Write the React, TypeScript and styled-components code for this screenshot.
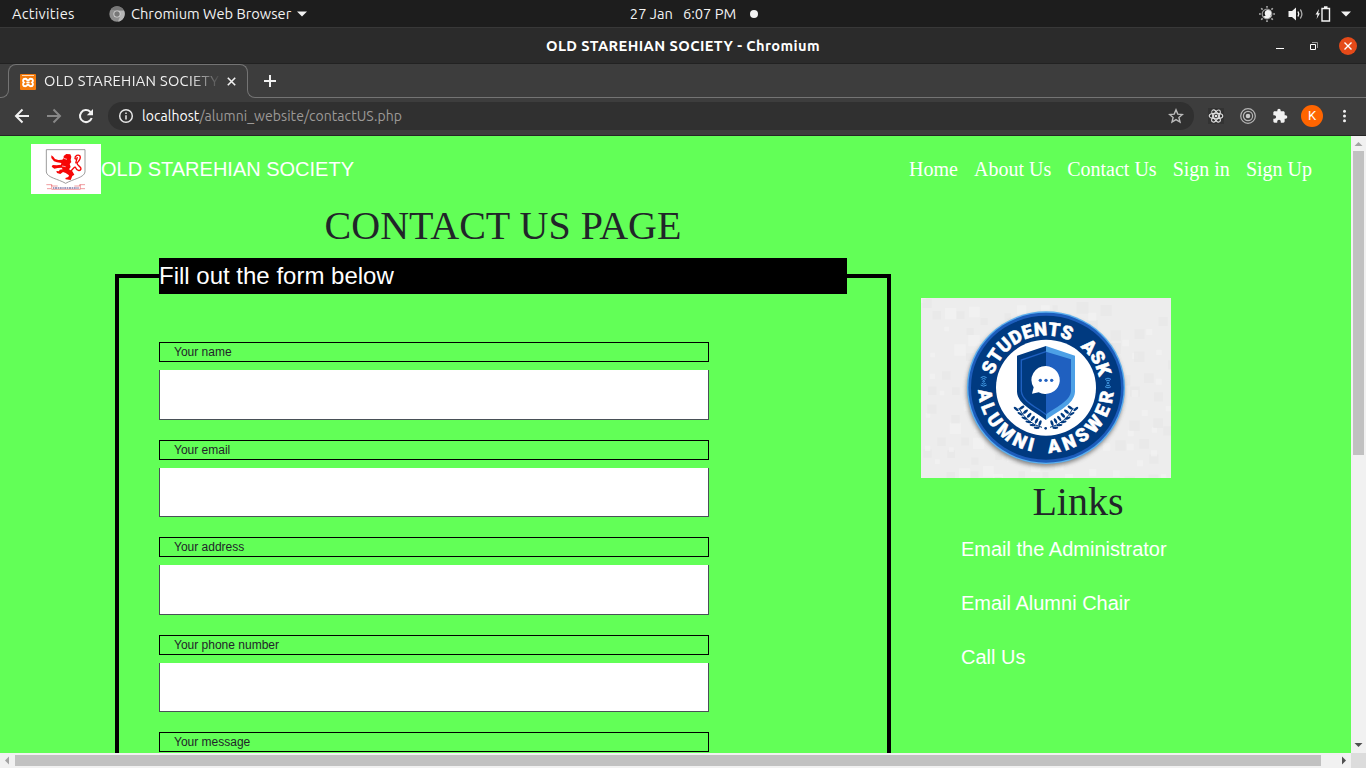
import React from "react";
import styled, { createGlobalStyle } from "styled-components";

const GlobalStyle = createGlobalStyle`
  * { box-sizing: border-box; }
  html, body { margin: 0; padding: 0; overflow: hidden; }
`;

const ui = `"Ubuntu", "Noto Sans", sans-serif`;
const sans = `"Liberation Sans", Arial, sans-serif`;
const serif = `"Liberation Serif", "Times New Roman", serif`;

const Screen = styled.div`
  width: 1366px;
  height: 768px;
  display: flex;
  flex-direction: column;
  overflow: hidden;
  background: #3d3d3d;
  font-family: ${ui};
`;

/* Desktop panel */
const Panel = styled.header`
  height: 27px;
  flex: none;
  display: grid;
  grid-template-columns: 1fr auto 1fr;
  align-items: center;
  background: #1d1d1d;
  color: #f2f2f2;
  font-size: 14.667px;
  line-height: 27px;
`;
const PanelLeft = styled.div`
  display: flex;
  align-items: center;
  padding-left: 12px;
`;
const Label = styled.span<{ $track?: number; $width?: number }>`
  white-space: pre;
  letter-spacing: ${(p) => p.$track ?? 0}px;
  width: ${(p) => (p.$width ? `${p.$width}px` : "auto")};
`;
const AppMenu = styled.div`
  display: flex;
  align-items: center;
  margin-left: 34px;
  gap: 6px;
`;
const Clock = styled.div`
  display: flex;
  align-items: center;
  gap: 10px;
  padding-left: 22px;
`;
const Dot = styled.i`
  width: 8px;
  height: 8px;
  border-radius: 50%;
  background: #f2f2f2;
  margin-left: 4px;
`;
const Tray = styled.div`
  display: flex;
  justify-content: flex-end;
  align-items: center;
  padding-right: 15px;
`;

/* Window title */
const TitleBar = styled.div`
  height: 37px;
  flex: none;
  display: grid;
  grid-template-columns: 1fr auto 1fr;
  align-items: center;
  background: #2b2b2b;
  border-top: 1px solid #383838;
  border-bottom: 1px solid #222;
  color: #fff;
  font-size: 14.667px;
  font-weight: 700;
`;
const WindowButtons = styled.div`
  display: flex;
  justify-content: flex-end;
  align-items: center;
  padding-right: 9px;
`;

/* Tabs */
const TabStrip = styled.div`
  height: 34px;
  flex: none;
  display: flex;
  align-items: flex-end;
  background: #3d3d3d;
`;
const FlareLeft = styled.div`
  width: 9px;
  height: 9px;
  border: solid #747474;
  border-width: 0 1px 1px 0;
  border-bottom-right-radius: 8px;
`;
const Tab = styled.div`
  width: 240px;
  height: 26px;
  margin: 0 0 8px -1px;
  display: flex;
  align-items: center;
  border: solid #747474;
  border-width: 1px 1px 0 1px;
  border-radius: 8px 8px 0 0;
  padding: 8px 9px 0 11px;
  color: #f1f1f1;
  font-size: 14.667px;
`;
const TabTitle = styled.div`
  width: 177px;
  margin: -2px 0 0 8px;
  line-height: 18px;
  overflow: hidden;
  white-space: nowrap;
  letter-spacing: 0.3px;
  mask-image: linear-gradient(90deg, #000 82%, transparent);
`;
const StripRest = styled.div`
  flex: 1;
  height: 34px;
  margin-left: -1px;
  display: flex;
  flex-direction: column;
`;
const NewTab = styled.div`
  height: 25px;
  padding: 11px 0 0 17px;
`;
const FlareRight = styled.div`
  height: 9px;
  border: solid #747474;
  border-width: 0 0 1px 1px;
  border-bottom-left-radius: 8px;
`;

/* Address bar */
const Toolbar = styled.div`
  height: 38px;
  flex: none;
  display: flex;
  align-items: center;
  background: #3d3d3d;
  border-bottom: 1px solid #262626;
  padding: 0 0 1px 14px;
`;
const NavButtons = styled.div`
  display: flex;
  gap: 16px;
`;
const AddressField = styled.div`
  width: 1086px;
  height: 28px;
  margin-left: 14px;
  display: flex;
  align-items: center;
  padding: 0 10px;
  border-radius: 14px;
  background: #303030;
  color: #9d9a98;
  font-size: 14px;
`;
const Url = styled.div`
  flex: 1;
  margin-left: 8px;
  letter-spacing: 0.05px;
  line-height: 18px;
  padding-bottom: 1px;
`;
const Host = styled.span`
  color: #fff;
`;
const Extensions = styled.div`
  display: flex;
  align-items: center;
  margin-left: 14px;
`;
const Avatar = styled.div`
  width: 22px;
  height: 22px;
  margin: 0 13px 0 13px;
  border-radius: 50%;
  background: #ff6500;
  color: #fff;
  font: 13px/22px Roboto, sans-serif;
  text-align: center;
`;

/* Viewport with scrollbars */
const Viewport = styled.div`
  flex: 1;
  min-height: 0;
  display: grid;
  grid-template-columns: 1351px 15px;
  grid-template-rows: 617px 15px;
`;
const Page = styled.main`
  overflow: hidden;
  background: #62ff57;
  font-family: ${sans};
`;
const ScrollY = styled.div`
  display: flex;
  flex-direction: column;
  align-items: center;
  background: #f1f1f1;
`;
const ThumbY = styled.div`
  width: 11px;
  height: 304px;
  margin-bottom: auto;
  background: #c1c1c1;
`;
const ScrollX = styled.div`
  display: flex;
  align-items: center;
  background: #f1f1f1;
`;
const ThumbX = styled.div`
  width: 1306px;
  height: 11px;
  margin-right: auto;
  background: #c1c1c1;
`;
const Corner = styled.div`
  background: #dcdcdc;
`;

const SiteNav = styled.nav`
  height: 66px;
  display: flex;
  align-items: center;
  padding: 0 39px 0 31px;
`;
const Brand = styled.div`
  flex: 1;
  display: flex;
  align-items: center;
  color: #fff;
  font-size: 20px;
  line-height: 30px;
`;
const NavLinks = styled.div`
  display: flex;
  gap: 16px;
  color: #fff;
  font: 20px/30px ${serif};
`;
const Columns = styled.div`
  display: flex;
  padding-left: 115px;
`;
const FormColumn = styled.section`
  width: 776px;
`;
const Heading = styled.h1`
  margin: 0;
  font: 400 40px/48px ${serif};
  color: #212529;
  text-align: center;
`;
const Form = styled.fieldset`
  height: 700px;
  margin: 8px 0 0;
  padding: 0 40px;
  border: 4px solid #000;
`;
const Legend = styled.legend`
  width: 688px;
  height: 36px;
  padding: 0;
  margin-bottom: 48px;
  background: #000;
  color: #fff;
  font-size: 24px;
  line-height: 36px;
`;
const Field = styled.div`
  width: 550px;
  height: 97.5px;
`;
const FieldLabel = styled.label`
  display: block;
  height: 20px;
  padding-left: 14px;
  margin-bottom: 8px;
  border: 1px solid #000;
  color: #212529;
  font-size: 12px;
  line-height: 18px;
`;
const FieldInput = styled.input`
  display: block;
  width: 100%;
  height: 49.5px;
  border: 1px solid #495057;
  border-top: 0;
  border-radius: 0;
  background: #fff;
`;
const Sidebar = styled.aside`
  width: 314px;
  margin-left: 30px;
  padding-top: 96px;
`;
const LinkList = styled.ul`
  list-style: none;
  margin: 0;
  padding: 8px 0 0 40px;
  color: #fff;
  font-size: 20px;
  line-height: 30px;
`;
const LinkItem = styled.li`
  margin-bottom: 24px;
`;
const Picture = styled.svg`
  display: block;
  flex: none;
`;
const Icon = styled.svg<{ $ml?: number }>`
  display: block;
  flex: none;
  margin-left: ${(p) => p.$ml ?? 0}px;
`;

const Arrow = ({ d, dark }: { d: string; dark?: boolean }) => (
  <Icon width="15" height="15" viewBox="0 0 15 15">
    <path d={d} fill={dark ? "#505050" : "#a3a3a3"} />
  </Icon>
);

const Crest = () => (
  <Picture width="70" height="50" viewBox="0 0 210 150">
    <rect width="210" height="150" fill="#fff" />
    <path d="M46 17H162V84C160 101 126 105 104 118C82 105 48 101 46 84Z" fill="none" stroke="#888" strokeWidth="2.5" />
    <path
      fill="#f60606"
      d="M98 36L106 30L118 31L121 38L119 48L121 54L116 60L119 69L114 76L124 82L130 92L124 96L119 108L104 106L103 102L112 99L114 94L104 87L96 84L88 90L78 87L76 81L84 82L86 77L95 76L92 71L80 72L70 74L62 68L65 63L77 64L90 62L91 57L78 55L69 52L61 42L61 34L67 38L72 45L82 48L94 47L98 42Z"
    />
    <path d="M98 43L108 46M93 66L104 68" stroke="#fff" strokeWidth="2" />
    <path d="M118 83C128 72 132 66 134 71C137 79 147 83 150 75C151 67 138 66 138 57C145 49 151 44 147 36C142 31 131 34 132 44L138 47M139 39L134 58" fill="none" stroke="#f60606" strokeWidth="4" />
    <path d="M46 122H62V126H80M162 122H146V126H130M48 134H60M148 134H162M62 122V136H148V122" fill="none" stroke="#e8696f" strokeWidth="2" />
    <path d="M66 132H144" stroke="#7d7daa" strokeWidth="5" strokeDasharray="4 2 6 2" />
  </Picture>
);

const polar = (r: number, deg: number) => {
  const a = (deg * Math.PI) / 180;
  return `${390 + r * Math.sin(a)} ${293 - r * 0.966 * Math.cos(a)}`;
};
const words = [
  { t: "STUDENTS", r: 162, a: -76, b: 27 },
  { t: "ASK", r: 162, a: 39, b: 78 },
  { t: "ALUMNI", r: 203, a: -92, b: -168 },
  { t: "ANSWER", r: 203, a: 178, b: 94 },
];
const tiles = Array.from({ length: 150 }, (_, i) => ({
  x: 15 + ((i * 137) % 750),
  y: 24 + ((i * 89 + ((i * i) % 53)) % 540),
  s: 14 + ((i * 7) % 22),
  dark: i % 2,
}));
const leaves = [0, 1, 2, 3, 4, 5];

const Badge = () => (
  <Picture width="250" height="180" viewBox="15 24 750 540">
    <defs>
      <filter id="soft" x="-20%" y="-20%" width="140%" height="140%">
        <feGaussianBlur stdDeviation="6" />
      </filter>
    </defs>
    <rect x="15" y="24" width="750" height="540" fill="#ededed" />
    {tiles.map((t, i) => (
      <rect key={i} x={t.x} y={t.y} width={t.s} height={t.s} fill={t.dark ? "#e6e6e6" : "#f3f3f3"} opacity="0.6" />
    ))}
    <ellipse cx="388" cy="301" rx="236" ry="228" fill="#555" opacity="0.7" filter="url(#soft)" />
    <ellipse cx="390" cy="293" rx="237" ry="229" fill="#5bb0ef" />
    <ellipse cx="390" cy="293" rx="233" ry="225" fill="#1d5dbc" />
    <ellipse cx="390" cy="293" rx="225" ry="216" fill="#003a80" />
    <ellipse cx="390" cy="293" rx="150" ry="144" fill="#fff" />
    {words.map((w) => {
      const ccw = w.b < w.a;
      const len = (Math.abs(w.b - w.a) * Math.PI * w.r * 0.983) / 180;
      return (
        <g key={w.t}>
          <path id={`arc-${w.t}`} fill="none" d={`M${polar(w.r, w.a)}A${w.r} ${w.r * 0.966} 0 0 ${ccw ? 0 : 1} ${polar(w.r, w.b + (ccw ? -6 : 6))}`} />
          <text fontFamily="Roboto, sans-serif" fontWeight="900" fontSize="56" fill="#fff" stroke="#fff" strokeWidth="1.5" strokeLinejoin="round">
            <textPath href={`#arc-${w.t}`} textLength={len} lengthAdjust="spacing">{w.t}</textPath>
          </text>
        </g>
      );
    })}
    {[203, 576].map((x) => (
      <g key={x} transform={`translate(${x} ${x < 300 ? 274 : 279})`} fill="none" stroke="#459ee8" strokeWidth="3">
        <circle r="2.5" />
        <path d="M-6-6Q0-11 6-6M-9-11Q0-18 9-11M-6 6Q0 11 6 6M-9 11Q0 18 9 11" />
      </g>
    ))}
    <path d="M390 168L303 197V305C305 345 360 365 390 390Z" fill="#003a80" />
    <path d="M390 168L477 197V305C475 345 420 365 390 390Z" fill="#4da0e6" />
    <path d="M390 185L465 208V303C463 335 415 353 390 374Z" fill="#1f60c0" />
    <path d="M390 185L316 210V303C318 335 365 353 390 374" fill="none" stroke="#1f60c0" strokeWidth="4" />
    <path d="M390 228A43 42 0 1 1 368 307L348 311L353 292A43 42 0 0 1 390 228Z" fill="#fff" />
    <g fill="#1f60c0">
      <circle cx="373" cy="271" r="5" />
      <circle cx="390" cy="271" r="5" />
      <circle cx="407" cy="271" r="5" />
    </g>
    {[1, -1].map((s) => (
      <g key={s} transform={`translate(390 0) scale(${s} 1)`} fill="#003a80">
        <path d="M12 412Q55 402 82 354" fill="none" stroke="#003a80" strokeWidth="3" />
        {leaves.map((i) => {
          const x = 20 + i * 12;
          const y = 408 - i * 6 - i * i * 0.8;
          return (
            <g key={i} transform={`translate(${x} ${y}) rotate(${-10 - i * 8})`}>
              <ellipse cx="1" cy="-9" rx="4" ry="9" transform="rotate(-10)" />
              <ellipse cx="8" cy="5" rx="9" ry="3.5" transform="rotate(12)" />
            </g>
          );
        })}
      </g>
    ))}
    <circle cx="389" cy="415" r="4" fill="#003a80" />
  </Picture>
);

const fields = ["Your name", "Your email", "Your address", "Your phone number", "Your message"];

export default function App() {
  return (
    <Screen>
      <GlobalStyle />
      <Panel>
        <PanelLeft>
          <Label $width={63} $track={0.25}>Activities</Label>
          <AppMenu>
            <Icon width="16" height="16" viewBox="0 0 16 16">
              <circle cx="8" cy="8" r="7.7" fill="#8d8d8d" />
              <path d="M8 4.2H15A8 8 0 0 1 9 15.6L11.4 9.5Z" fill="#b5b5b5" />
              <path d="M1.8 3.5A7.7 7.7 0 0 1 15 4.4H8Z" fill="#777" />
              <circle cx="8" cy="8" r="3.6" fill="#d5d5d5" />
              <circle cx="8" cy="8" r="2.7" fill="#777" />
            </Icon>
            <Label $width={160}>Chromium Web Browser</Label>
            <Icon width="10" height="6" viewBox="0 0 10 6"><path d="M0 0.5H10L5 5.5Z" fill="#f2f2f2" /></Icon>
          </AppMenu>
        </PanelLeft>
        <Clock>
          <Label>27 Jan</Label>
          <Label>6:07 PM</Label>
          <Dot />
        </Clock>
        <Tray>
          <Icon width="16" height="16" viewBox="0 0 16 16">
            <g stroke="#aaa" strokeWidth="1.6"><path d="M8 0V1.8M8 14.2V16M0 8H1.8M14.2 8H16M2.2 2.2L3.6 3.6M12.4 12.4L13.8 13.8M13.8 2.2L12.4 3.6M2.2 13.8L3.6 12.4" /></g>
            <circle cx="8" cy="8" r="4.8" fill="none" stroke="#999" strokeWidth="1.2" />
            <path d="M8.2 3.4A4.7 4.7 0 0 0 12.4 9.800A4.900 4.900 0 0 1 4.200 10.500A4.700 4.700 0 0 0 8.200 3.400Z" fill="#f2f2f2" />
            <circle cx="9" cy="7.200" r="3.200" fill="#f2f2f2" />
          </Icon>
          <Icon $ml={13} width="16" height="16" viewBox="0 0 16 16">
            <path d="M0.500 5H4L8 1.500V14.500L4 11H0.500Z" fill="#f2f2f2" />
            <path d="M10 5.500Q11.500 8 10 10.500" fill="none" stroke="#f2f2f2" strokeWidth="1.400" />
            <path d="M12.300 3.500Q15.500 8 12.300 12.500" fill="none" stroke="#aaa" strokeWidth="1.300" />
          </Icon>
          <Icon $ml={11} width="16" height="16" viewBox="0 0 16 16">
            <path d="M4 3L0.500 8.500H2.500L1.600 13L5 7.300H3.200Z" fill="#f2f2f2" />
            <path d="M7 2.500H14.500V15H7ZM9 1H12.500" fill="none" stroke="#f2f2f2" strokeWidth="1.400" />
          </Icon>
          <Icon $ml={10} width="10" height="6" viewBox="0 0 10 6"><path d="M0 0.500H10L5 5.500Z" fill="#f2f2f2" /></Icon>
        </Tray>
      </Panel>

      <TitleBar>
        <span />
        <Label $track={0.4}>OLD STAREHIAN SOCIETY - Chromium</Label>
        <WindowButtons>
          <Icon width="8" height="8" viewBox="0 0 8 8"><path d="M0 6.500H8" stroke="#fff" /></Icon>
          <Icon $ml={26} width="8" height="8" viewBox="0 0 8 8">
            <path d="M2 .5H7.500V6" fill="none" stroke="#999" />
            <path d="M.5 2.500H5.500V7.500H.5Z" fill="none" stroke="#fff" />
          </Icon>
          <Icon $ml={21} width="18" height="18" viewBox="0 0 18 18">
            <circle cx="9" cy="9" r="9" fill="#e54a19" />
            <path d="M5.500 5.500L12.500 12.500M12.500 5.500L5.500 12.500" stroke="#fff" strokeWidth="1.400" />
          </Icon>
        </WindowButtons>
      </TitleBar>

      <TabStrip>
        <FlareLeft />
        <Tab>
          <Icon width="16" height="16" viewBox="0 0 16 16">
            <rect width="16" height="16" rx="1" fill="#f47b0c" />
            <path d="M2 1.500H14" stroke="#ffd9b5" />
            <path d="M5.200 4.800C2.600 4.800 2.600 7.400 4 8.400C2.600 9.600 2.600 12.200 5.200 12.200C7 12.200 7.200 10.500 8 10.500S9 12.200 10.800 12.200C13.400 12.200 13.400 9.600 12 8.400C13.400 7.400 13.400 4.800 10.800 4.800C9 4.800 9 6.500 8 6.500S7 4.800 5.200 4.800Z" fill="none" stroke="#fff" strokeWidth="1.900" />
            <path d="M6.300 8.500H9.700" stroke="#fff" strokeWidth="1.600" />
          </Icon>
          <TabTitle>OLD STAREHIAN SOCIETY</TabTitle>
          <Icon $ml={6} width="9" height="9" viewBox="0 0 9 9"><path d="M.8 .8L8.200 8.200M8.200 .8L.8 8.200" stroke="#f1f1f1" strokeWidth="1.600" /></Icon>
        </Tab>
        <StripRest>
          <NewTab>
            <Icon width="12" height="12" viewBox="0 0 12 12"><path d="M6 0V12M0 6H12" stroke="#f1f1f1" strokeWidth="2" /></Icon>
          </NewTab>
          <FlareRight />
        </StripRest>
      </TabStrip>

      <Toolbar>
        <NavButtons>
          <Icon width="16" height="16" viewBox="0 0 16 16"><path d="M15 8H2.500M8.500 1.500L2 8L8.500 14.500" fill="none" stroke="#f1f1f1" strokeWidth="2" /></Icon>
          <Icon width="16" height="16" viewBox="0 0 16 16"><path d="M1 8H13.500M7.500 1.500L14 8L7.500 14.500" fill="none" stroke="#888" strokeWidth="2" /></Icon>
          <Icon width="16" height="16" viewBox="0 0 16 16">
            <path d="M13.700 10A6 6 0 1 1 12.200 3.800L13.500 5" fill="none" stroke="#f1f1f1" strokeWidth="2" />
            <path d="M15 1V7.200H8.800Z" fill="#f1f1f1" />
          </Icon>
        </NavButtons>
        <AddressField>
          <Icon width="16" height="16" viewBox="0 0 16 16">
            <circle cx="8" cy="8" r="6.300" fill="none" stroke="#e6e6e6" strokeWidth="1.500" />
            <path d="M8 7.200V11.500M8 4.500V6" stroke="#e6e6e6" strokeWidth="1.500" />
          </Icon>
          <Url><Host>localhost</Host>/alumni_website/contactUS.php</Url>
          <Icon width="16" height="16" viewBox="0 0 16 16">
            <path d="M8 1.900L9.800 6.100L14.400 6.500L10.900 9.500L12 14L8 11.600L4 14L5.100 9.500L1.600 6.500L6.200 6.100Z" fill="none" stroke="#bbb" strokeWidth="1.400" />
          </Icon>
        </AddressField>
        <Extensions>
          <Icon width="16" height="16" viewBox="0 0 16 16">
            <rect width="16" height="16" fill="#333" />
            <g fill="none" stroke="#e2e2e2" strokeWidth="1.100">
              <ellipse cx="8" cy="8" rx="6.800" ry="2.700" />
              <ellipse cx="8" cy="8" rx="6.800" ry="2.700" transform="rotate(60 8 8)" />
              <ellipse cx="8" cy="8" rx="6.800" ry="2.700" transform="rotate(120 8 8)" />
            </g>
            <circle cx="8" cy="8" r="1.300" fill="#e2e2e2" />
          </Icon>
          <Icon $ml={16} width="16" height="16" viewBox="0 0 16 16">
            <g fill="none" stroke="#b5b5b5" strokeWidth="1.200"><circle cx="8" cy="8" r="7.300" /><circle cx="8" cy="8" r="4.600" /></g>
            <circle cx="8" cy="8" r="2.300" fill="#c8c8c8" />
          </Icon>
          <Icon $ml={16} width="16" height="16" viewBox="0 0 24 24">
            <path fill="#f1f1f1" d="M20.500 11H19V7c0-1.100-.9-2-2-2h-4V3.500a2.500 2.500 0 0 0-5 0V5H4c-1.100 0-2 .9-2 2v3.800h1.500a2.700 2.700 0 0 1 0 5.400H2V20c0 1.100.9 2 2 2h3.800v-1.500a2.700 2.700 0 0 1 5.400 0V22H17c1.100 0 2-.9 2-2v-4h1.500a2.500 2.500 0 0 0 0-5z" />
          </Icon>
          <Avatar>K</Avatar>
          <Icon width="16" height="16" viewBox="0 0 16 16"><g fill="#f1f1f1"><circle cx="8.500" cy="3.200" r="1.500" /><circle cx="8.500" cy="8" r="1.500" /><circle cx="8.500" cy="12.800" r="1.500" /></g></Icon>
        </Extensions>
      </Toolbar>

      <Viewport>
        <Page>
          <SiteNav>
            <Brand><Crest />OLD STAREHIAN SOCIETY</Brand>
            <NavLinks>
              {["Home", "About Us", "Contact Us", "Sign in", "Sign Up"].map((t) => <span key={t}>{t}</span>)}
            </NavLinks>
          </SiteNav>
          <Columns>
            <FormColumn>
              <Heading>CONTACT US PAGE</Heading>
              <Form>
                <Legend>Fill out the form below</Legend>
                {fields.map((f) => (
                  <Field key={f}>
                    <FieldLabel>{f}</FieldLabel>
                    <FieldInput readOnly />
                  </Field>
                ))}
              </Form>
            </FormColumn>
            <Sidebar>
              <Badge />
              <Heading>Links</Heading>
              <LinkList>
                <LinkItem>Email the Administrator</LinkItem>
                <LinkItem>Email Alumni Chair</LinkItem>
                <LinkItem>Call Us</LinkItem>
              </LinkList>
            </Sidebar>
          </Columns>
        </Page>
        <ScrollY>
          <Arrow d="M3.500 10L7.500 6L11.500 10Z" />
          <ThumbY />
          <Arrow d="M3.500 5L7.500 9L11.500 5Z" dark />
        </ScrollY>
        <ScrollX>
          <Arrow d="M9 3.500L5 7.500L9 11.500Z" />
          <ThumbX />
          <Arrow d="M6 3.500L10 7.500L6 11.500Z" dark />
        </ScrollX>
        <Corner />
      </Viewport>
    </Screen>
  );
}
